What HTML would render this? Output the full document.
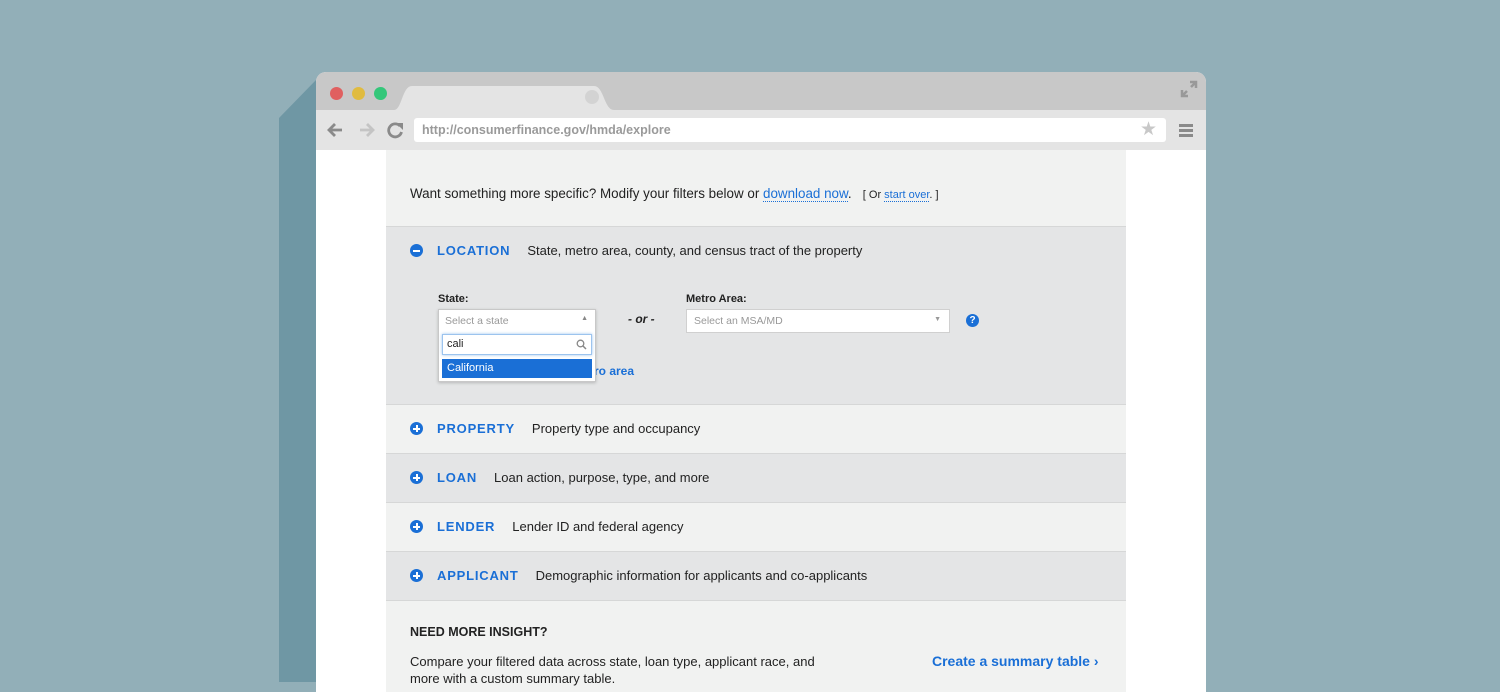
<!DOCTYPE html>
<html><head><meta charset="utf-8"><style>
*{margin:0;padding:0;box-sizing:border-box}
body{width:1500px;height:675px;overflow:hidden;background:#92afb8;font-family:"Liberation Sans",sans-serif;position:relative;color:#222}
.abs{position:absolute}
.browser{left:316px;top:72px;width:890px;height:620px;border-radius:10px 10px 0 0;overflow:hidden;background:#fff}
.tabbar{left:0;top:0;width:890px;height:38px;background:#c8c8c8}
.toolbar{left:0;top:38px;width:890px;height:40px;background:#e4e4e4}
.url{left:98px;top:46px;width:752px;height:24px;background:#fff;border-radius:3px;font-size:12.5px;font-weight:bold;color:#9a9a9a;padding:5px 8px}
.panel{left:70px;top:78px;width:740px;height:560px;background:#f1f2f1}
.sec{position:absolute;left:0;width:740px;border-top:1px solid #d6d7d7}
.g{background:#e4e5e6}
.h{position:absolute;left:24px;font-size:13px;display:flex;align-items:center}
.ic{width:13px;height:13px;border-radius:50%;background:#1a6fd6;position:relative;margin-right:14px}
.ic:before{content:"";position:absolute;left:3px;top:5.5px;width:7px;height:2px;background:#fff}
.plus:after{content:"";position:absolute;left:5.5px;top:3px;width:2px;height:7px;background:#fff}
.t{color:#1a6fd6;font-weight:bold;letter-spacing:0.8px;margin-right:17px;font-size:13px}
a{color:#1a6fd6;text-decoration:none;border-bottom:1px dotted #1a6fd6}
</style></head><body>
<svg class="abs" style="left:279px;top:72px" width="40" height="610"><polygon points="37,8 37,610 0,610 0,46" fill="#6f97a4"/></svg>
<div class="abs browser">
 <div class="abs tabbar"></div>
 <svg class="abs" style="left:78px;top:14px" width="220" height="24"><path d="M0 24 C8 24 8 0 18 0 L200 0 C210 0 210 24 220 24Z" fill="#e4e4e4"/><circle cx="198" cy="11" r="7" fill="#d3d3d3"/></svg>
 <div class="abs" style="left:14px;top:15px;width:13px;height:13px;border-radius:50%;background:#e06060"></div>
 <div class="abs" style="left:36px;top:15px;width:13px;height:13px;border-radius:50%;background:#e0bb40"></div>
 <div class="abs" style="left:58px;top:15px;width:13px;height:13px;border-radius:50%;background:#34c77a"></div>
 <svg class="abs" style="left:864px;top:8px" width="18" height="18"><path d="M10 2h6v6M16 2l-5 5M8 16H2v-6M2 16l5-5" stroke="#999" stroke-width="2.5" fill="none"/></svg>
 <div class="abs toolbar"></div>
 <svg class="abs" style="left:10px;top:49px" width="90" height="18"><path d="M16 9H4M9 3L3 9l6 6" stroke="#8a8a8a" stroke-width="2.8" fill="none"/><path d="M34 9h12M41 3l6 6-6 6" stroke="#c4c4c4" stroke-width="2.8" fill="none"/><path d="M74 5a6.5 6.5 0 1 0 1.5 6" stroke="#8a8a8a" stroke-width="2.8" fill="none"/><path d="M70 2h7v7z" fill="#8a8a8a"/></svg>
 <div class="abs url">http://consumerfinance.gov/hmda/explore</div>
 <div class="abs" style="left:824px;top:46px;font-size:19px;color:#c8c8c8">★</div>
 <div class="abs" style="left:863px;top:52px;width:14px;height:3px;background:#8a8a8a;box-shadow:0 5px 0 #8a8a8a,0 10px 0 #8a8a8a"></div>
 <div class="abs panel">
  <div class="abs" style="left:24px;top:36px;font-size:13.4px">Want something more specific? Modify your filters below or <a>download now</a>. &nbsp; <span style="font-size:11px">[ Or <a>start over</a>. ]</span></div>
  <div class="sec g" style="top:76px;height:178px">
   <div class="h" style="top:16px"><span class="ic"></span><span class="t">LOCATION</span>State, metro area, county, and census tract of the property</div>
   <div class="abs" style="left:52px;top:66px;font-size:11px;font-weight:bold">State:</div>
   <div class="abs" style="left:300px;top:66px;font-size:11px;font-weight:bold">Metro Area:</div>
   <div class="abs" style="left:242px;top:85px;font-size:12px;font-weight:bold;font-style:italic">- or -</div>
   <div class="abs" style="left:300px;top:82px;width:264px;height:24px;background:#fff;border:1px solid #d0d0d0;font-size:10.5px;color:#999;padding:5px 7px">Select an MSA/MD<span style="position:absolute;right:8px;top:6px;font-size:7px">▼</span></div>
   <div class="abs" style="left:580px;top:87px;width:13px;height:13px;border-radius:50%;background:#1a6fd6;color:#fff;font-size:10px;font-weight:bold;text-align:center;line-height:13px">?</div>
   <div class="abs" style="left:204px;top:137px;font-size:12px;font-weight:bold;color:#1a6fd6">tro area</div>
   <div class="abs" style="left:52px;top:82px;width:158px;height:73px;background:#fff;border:1px solid #c8c8c8;box-shadow:0 1px 3px rgba(0,0,0,.2)">
    <div class="abs" style="left:6px;top:5px;font-size:10.5px;color:#999">Select a state</div>
    <div class="abs" style="right:7px;top:5px;font-size:7px;color:#888">▲</div>
    <div class="abs" style="left:3px;top:24px;width:150px;height:21px;border:1px solid #9cc4ee;box-shadow:0 0 3px #9cc4ee;font-size:11px;padding:3px 4px">cali
     <svg class="abs" style="right:4px;top:4px" width="11" height="11"><circle cx="4.5" cy="4.5" r="3.3" stroke="#888" stroke-width="1.3" fill="none"/><path d="M7 7l3 3" stroke="#888" stroke-width="1.5"/></svg></div>
    <div class="abs" style="left:3px;top:49px;width:150px;height:19px;background:#1a6fd6;color:#fff;font-size:11px;padding:3px 5px">California</div>
   </div>
  </div>
  <div class="sec" style="top:254px;height:49px"><div class="h" style="top:16px"><span class="ic plus"></span><span class="t">PROPERTY</span>Property type and occupancy</div></div>
  <div class="sec g" style="top:303px;height:49px"><div class="h" style="top:16px"><span class="ic plus"></span><span class="t">LOAN</span>Loan action, purpose, type, and more</div></div>
  <div class="sec" style="top:352px;height:49px"><div class="h" style="top:16px"><span class="ic plus"></span><span class="t">LENDER</span>Lender ID and federal agency</div></div>
  <div class="sec g" style="top:401px;height:49px"><div class="h" style="top:16px"><span class="ic plus"></span><span class="t">APPLICANT</span>Demographic information for applicants and co-applicants</div></div>
  <div class="sec" style="top:450px;height:110px">
   <div class="abs" style="left:24px;top:24px;font-size:12.5px;font-weight:bold">NEED MORE INSIGHT?</div>
   <div class="abs" style="left:24px;top:52px;font-size:13px;width:420px;line-height:17px">Compare your filtered data across state, loan type, applicant race, and more with a custom summary table.</div>
   <div class="abs" style="left:546px;top:52px;font-size:14px;font-weight:bold;color:#1a6fd6">Create a summary table ›</div>
  </div>
 </div>
</div>
</body></html>
